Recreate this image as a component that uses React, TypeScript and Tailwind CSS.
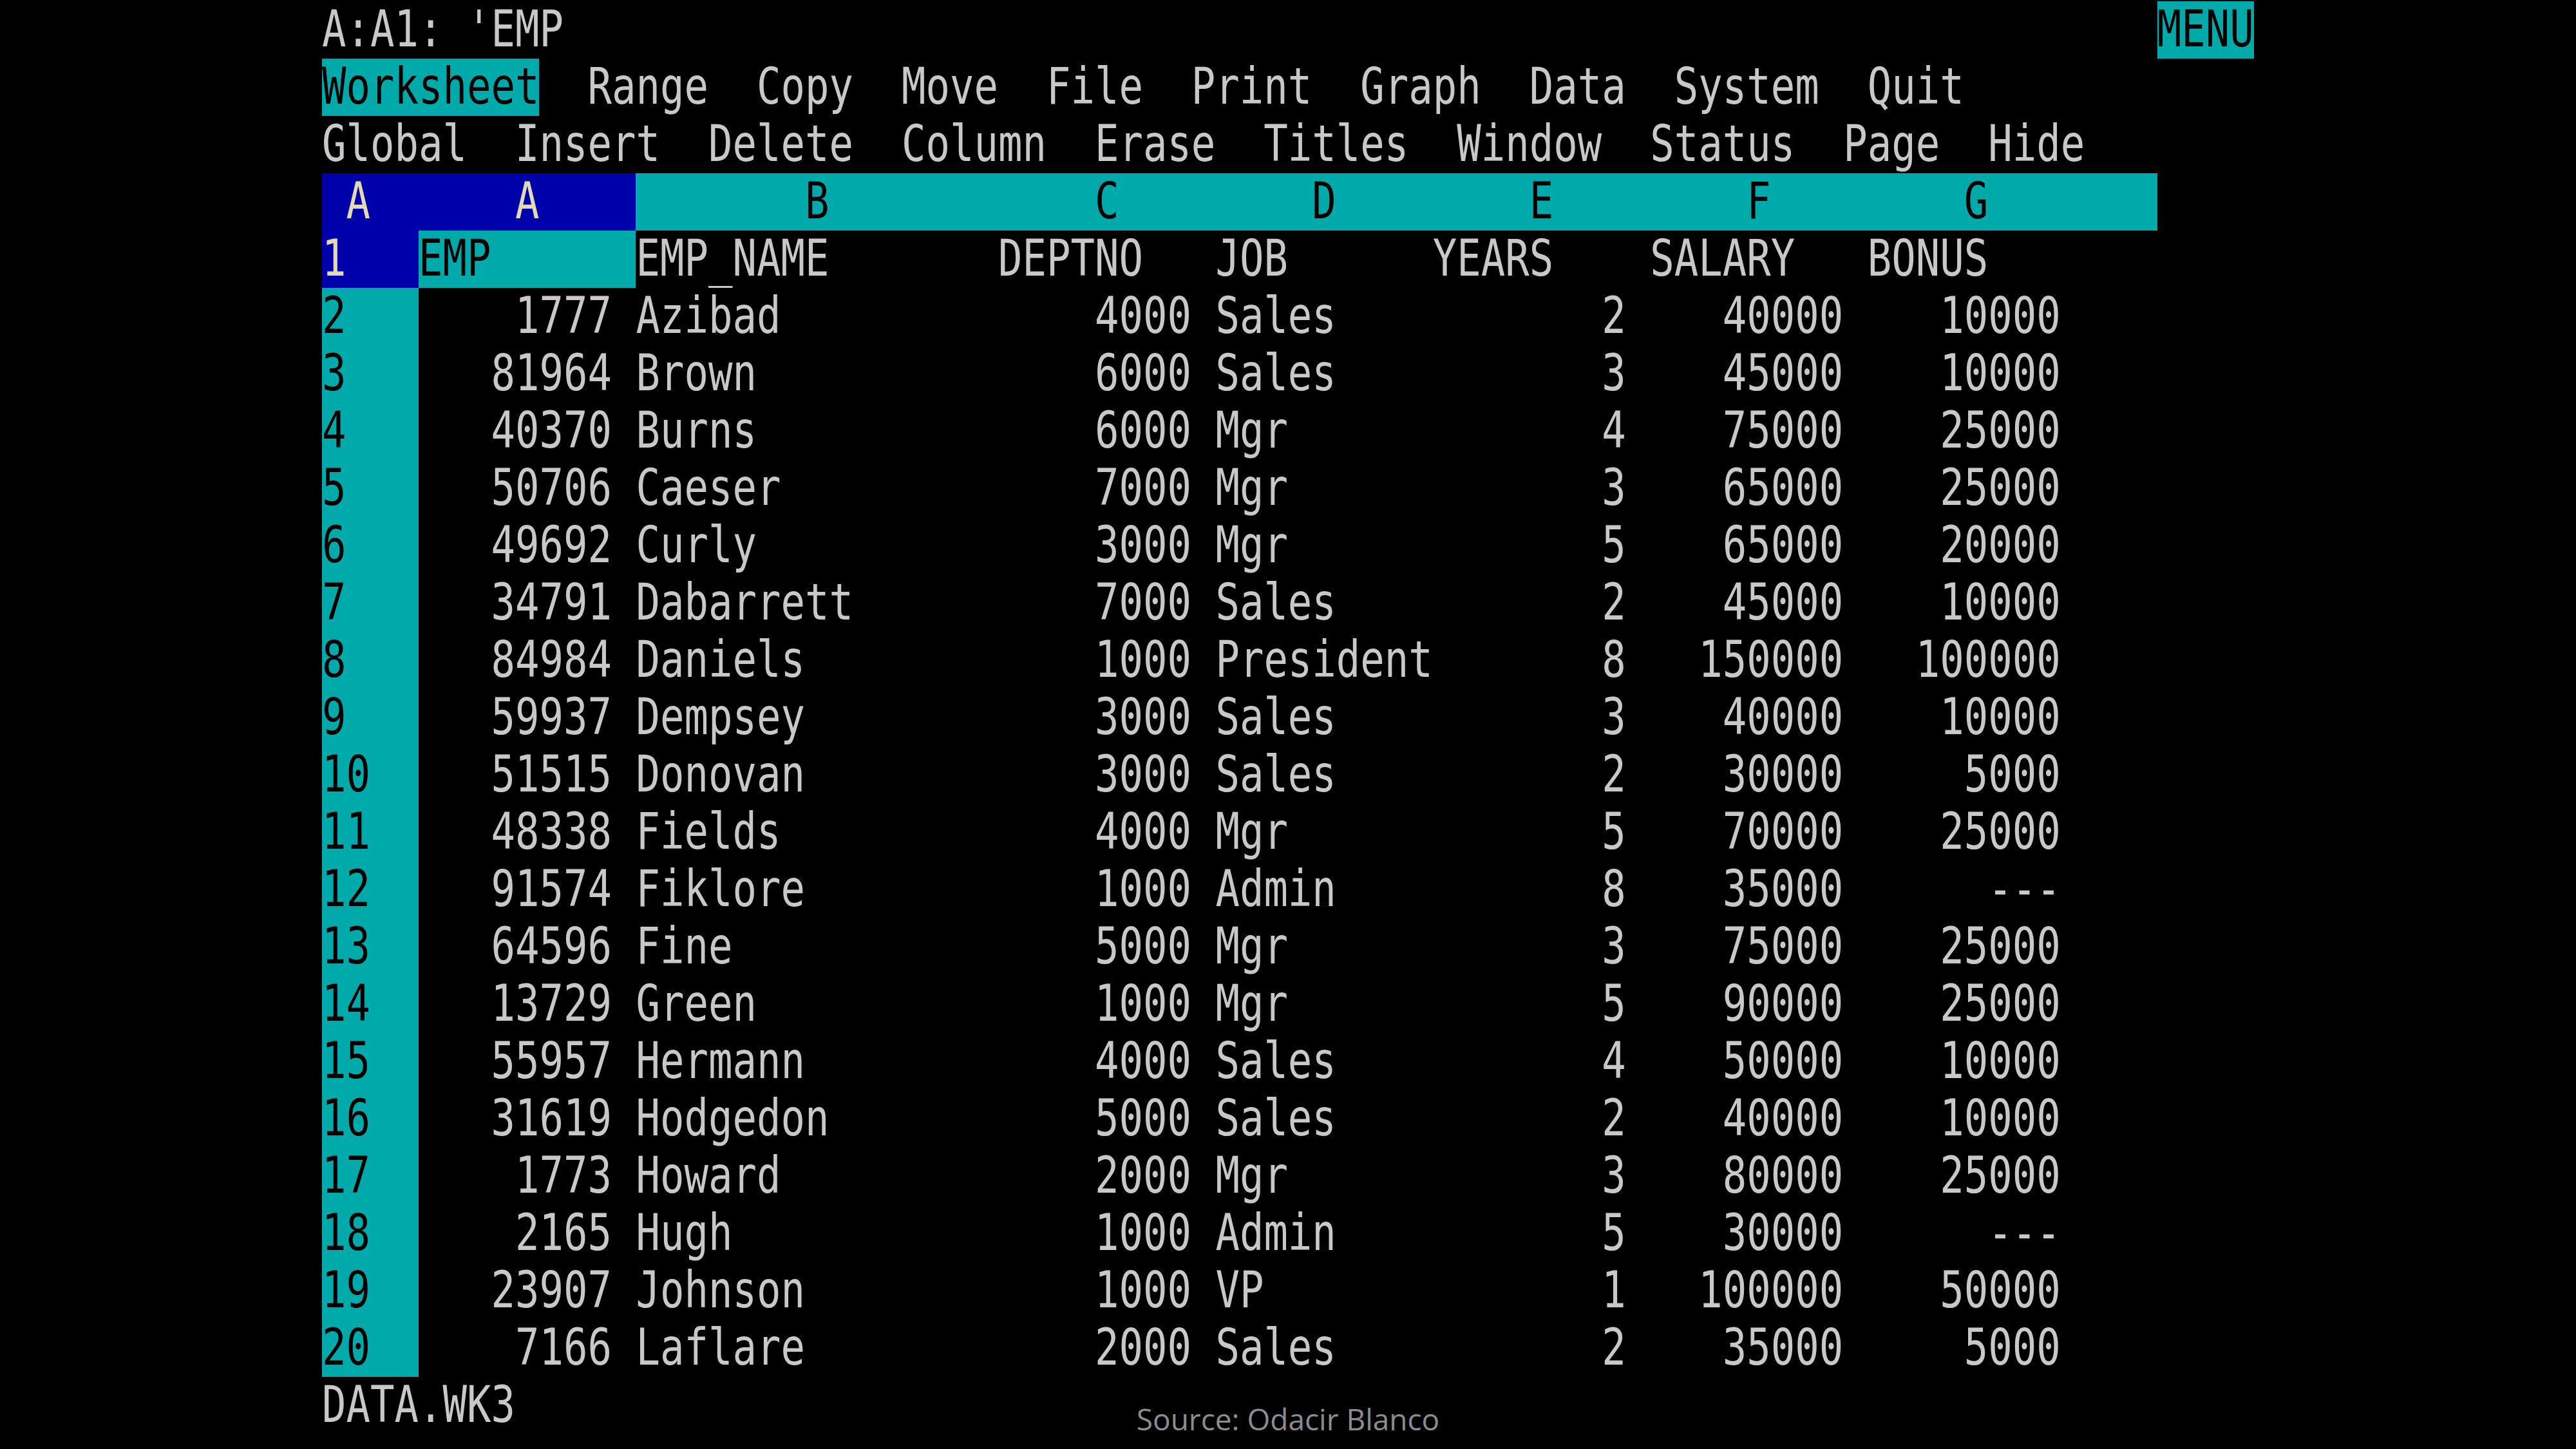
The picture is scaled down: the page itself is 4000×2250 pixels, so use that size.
import React from "react";

type Seg = { t: string; c: string };

const GRAY = "text-[#c8c8c8]";
const CYAN = "bg-[#00aaaa] text-black";
const BLUE = "bg-[#0000aa] text-[#e2dab4]";

const employees: string[][] = [
  ["2", "1777", "Azibad", "4000", "Sales", "2", "40000", "10000"],
  ["3", "81964", "Brown", "6000", "Sales", "3", "45000", "10000"],
  ["4", "40370", "Burns", "6000", "Mgr", "4", "75000", "25000"],
  ["5", "50706", "Caeser", "7000", "Mgr", "3", "65000", "25000"],
  ["6", "49692", "Curly", "3000", "Mgr", "5", "65000", "20000"],
  ["7", "34791", "Dabarrett", "7000", "Sales", "2", "45000", "10000"],
  ["8", "84984", "Daniels", "1000", "President", "8", "150000", "100000"],
  ["9", "59937", "Dempsey", "3000", "Sales", "3", "40000", "10000"],
  ["10", "51515", "Donovan", "3000", "Sales", "2", "30000", "5000"],
  ["11", "48338", "Fields", "4000", "Mgr", "5", "70000", "25000"],
  ["12", "91574", "Fiklore", "1000", "Admin", "8", "35000", "---"],
  ["13", "64596", "Fine", "5000", "Mgr", "3", "75000", "25000"],
  ["14", "13729", "Green", "1000", "Mgr", "5", "90000", "25000"],
  ["15", "55957", "Hermann", "4000", "Sales", "4", "50000", "10000"],
  ["16", "31619", "Hodgedon", "5000", "Sales", "2", "40000", "10000"],
  ["17", "1773", "Howard", "2000", "Mgr", "3", "80000", "25000"],
  ["18", "2165", "Hugh", "1000", "Admin", "5", "30000", "---"],
  ["19", "23907", "Johnson", "1000", "VP", "1", "100000", "50000"],
  ["20", "7166", "Laflare", "2000", "Sales", "2", "35000", "5000"],
];

// right-aligned value cell, last column left empty like 1-2-3 does
const num = (v: string) => v.padStart(8) + " ";

const screen: Seg[][] = [
  [
    { t: "A:A1: 'EMP".padEnd(76), c: GRAY },
    { t: "MENU", c: CYAN },
  ],
  [
    { t: "Worksheet", c: CYAN },
    { t: "  Range  Copy  Move  File  Print  Graph  Data  System  Quit", c: GRAY },
  ],
  [{ t: "Global  Insert  Delete  Column  Erase  Titles  Window  Status  Page  Hide", c: GRAY }],
  [
    { t: " A      A    ", c: BLUE },
    {
      t: "       B           C        D        E        F        G".padEnd(63),
      c: CYAN,
    },
  ],
  [
    { t: "1   ", c: BLUE },
    { t: "EMP      ", c: CYAN },
    {
      t: "EMP_NAME".padEnd(15) + "DEPTNO".padEnd(9) + "JOB".padEnd(9) + "YEARS".padEnd(9) + "SALARY".padEnd(9) + "BONUS",
      c: GRAY,
    },
  ],
  ...employees.map((e) => [
    { t: e[0].padEnd(4), c: CYAN },
    {
      t: num(e[1]) + e[2].padEnd(15) + num(e[3]) + e[4].padEnd(9) + num(e[5]) + num(e[6]) + num(e[7]),
      c: GRAY,
    },
  ]),
  [{ t: "DATA.WK3", c: GRAY }],
];

export default function App() {
  return (
    <div className="relative w-[4000px] h-[2250px] bg-black overflow-hidden">
      <div className="ml-[500px] pt-[2px] w-[3000px] font-['DejaVu_Sans_Mono',monospace] text-[62.29px] leading-none">
        {screen.map((row, i) => (
          <div key={i} className="flex h-[89px] items-stretch">
            {row.map((s, j) => (
              <span key={j} className={`flex items-center whitespace-pre ${s.c}`}>
                <span className="inline-block scale-y-125">{s.t}</span>
              </span>
            ))}
          </div>
        ))}
      </div>
      <div className="absolute left-0 right-0 top-[2180px] text-center font-['Open_Sans',sans-serif] text-[46px] leading-none text-[#8c8c8c]">
        Source: Odacir Blanco
      </div>
    </div>
  );
}
